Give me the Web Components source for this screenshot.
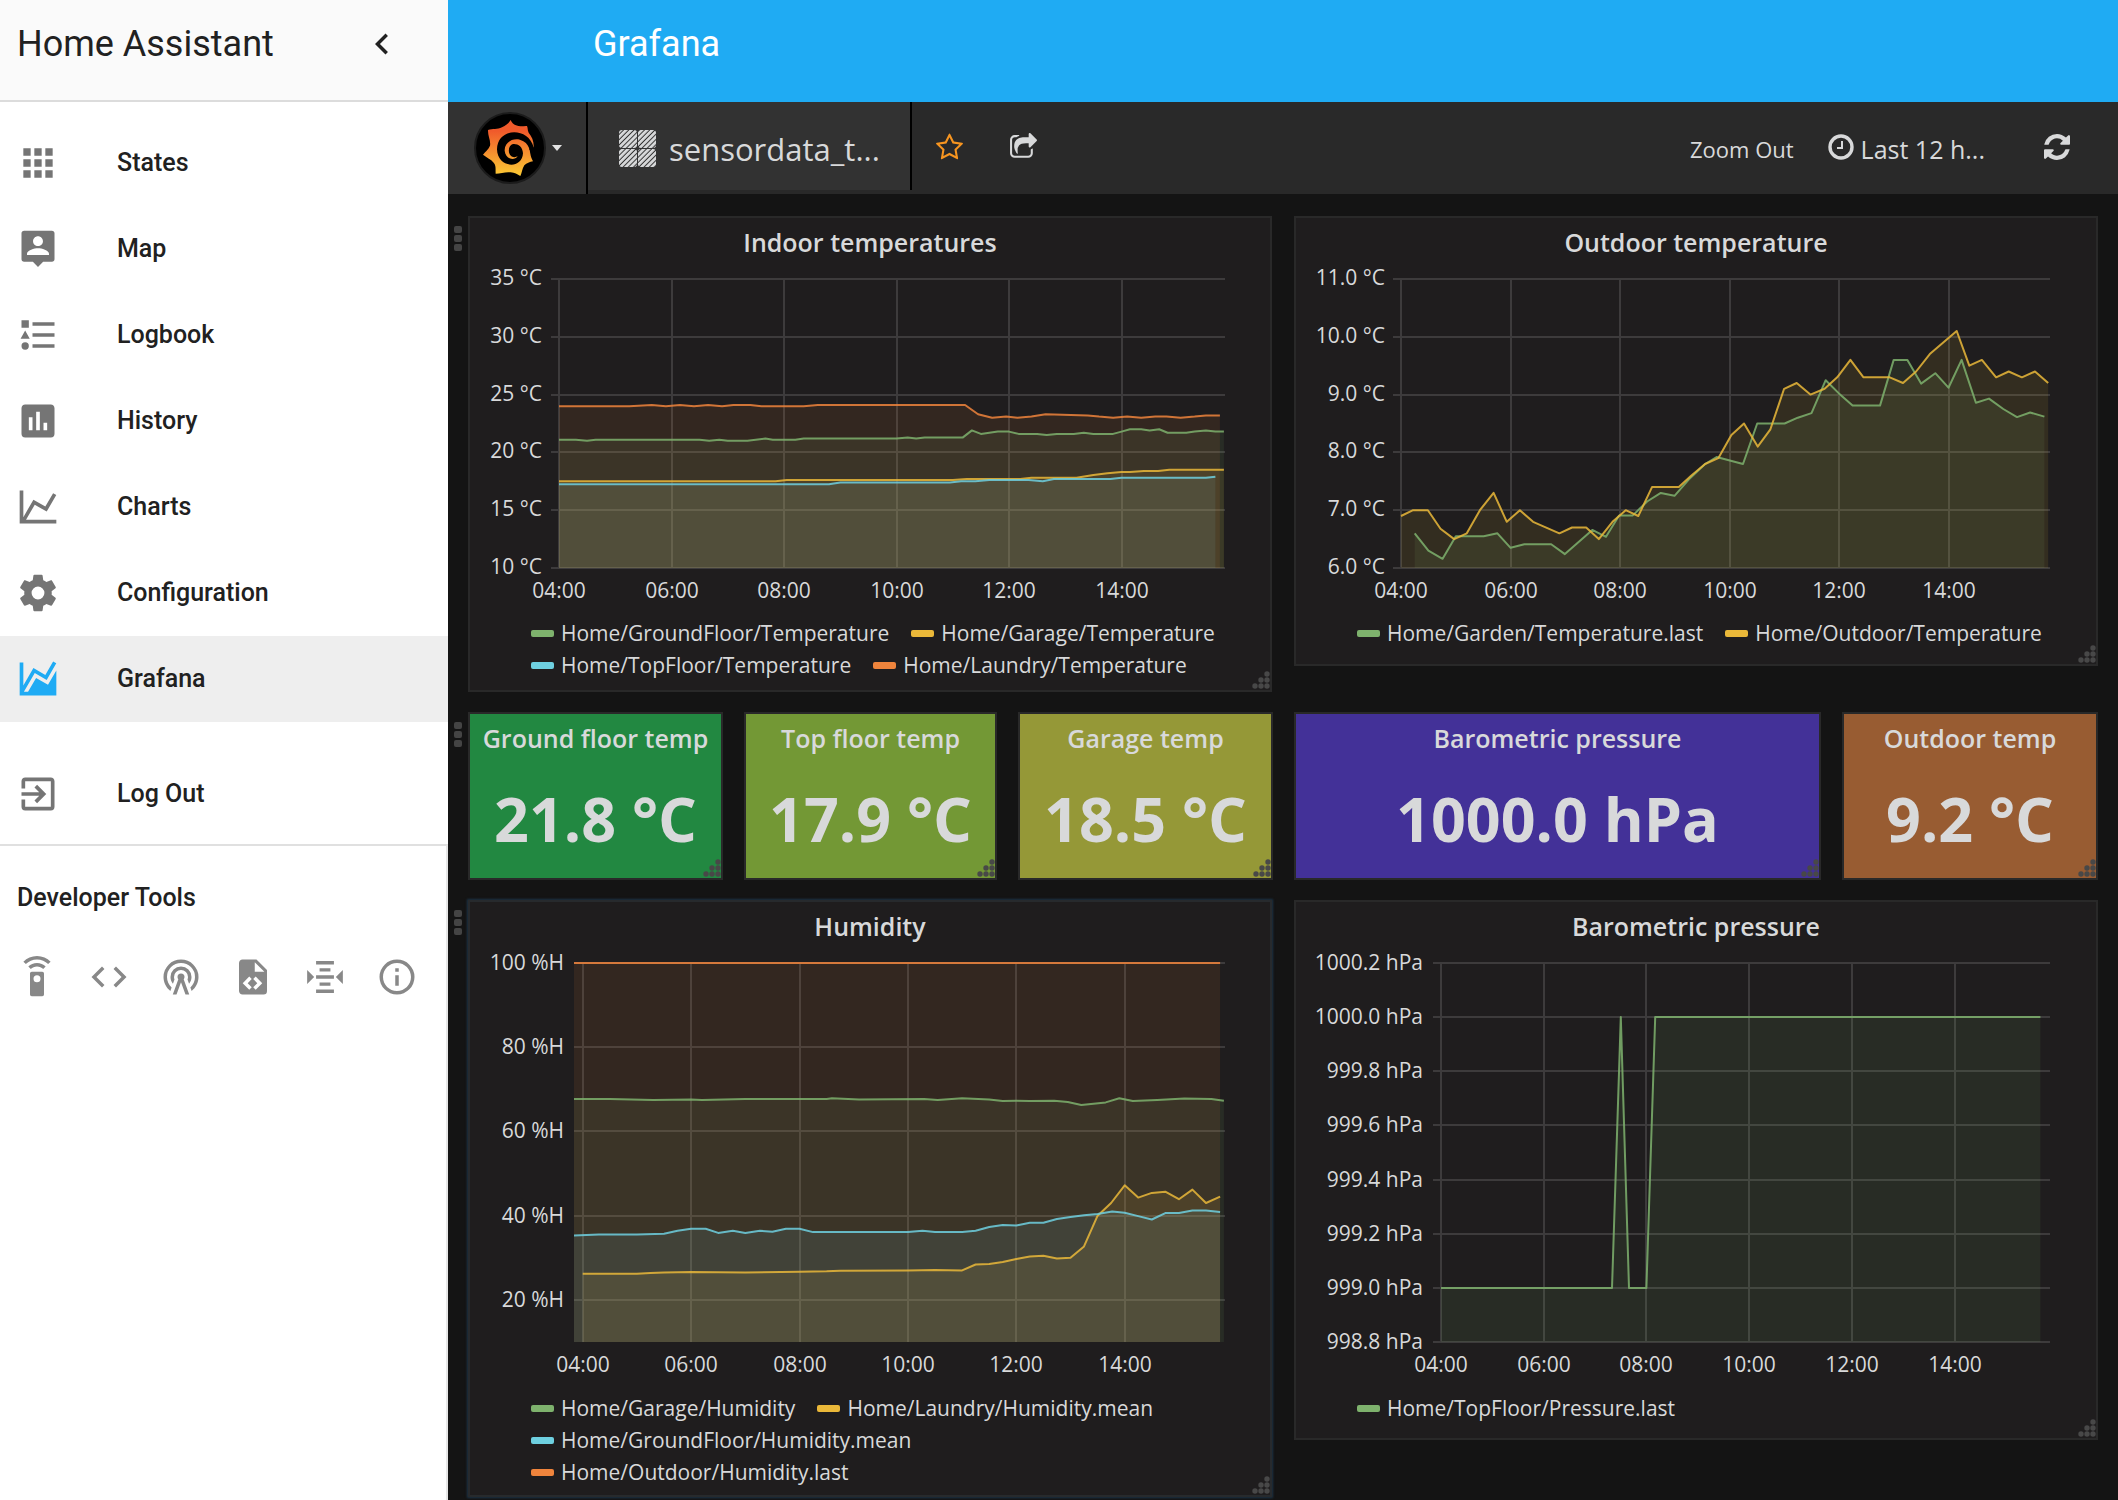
<!DOCTYPE html>
<html lang="en">
<head>
<meta charset="utf-8">
<title>Home Assistant – Grafana</title>
<style>
  html, body { margin: 0; height: 100%; }
  body { background: #141414; overflow: hidden; }
  ha-app { font-family: Roboto, "Open Sans", sans-serif; }
</style>
</head>
<body>
<ha-app></ha-app>

<script>
/* ---------- icons ---------- */
const ICONS = {
  'chevron-left': 'M15.41,16.58L10.83,12L15.41,7.41L14,6L8,12L14,18L15.41,16.58Z',
  apps: 'M16,20H20V16H16M16,14H20V10H16M10,8H14V4H10M16,8H20V4H16M10,14H14V10H10M4,14H8V10H4M4,20H8V16H4M10,20H14V16H10M4,8H8V4H4V8Z',
  account: 'M18,15.3H6V14.6C6,12.7 10,11.6 12,11.6C14,11.6 18,12.7 18,14.6M12,5.1C13.5,5.1 14.7,6.3 14.7,7.8C14.7,9.3 13.5,10.4 12,10.4C10.5,10.4 9.3,9.3 9.3,7.8C9.3,6.3 10.5,5.1 12,5.1M19.6,2H4.4C3.6,2 3,2.6 3,3.4V17.6C3,18.4 3.6,19 4.4,19H9.2L12,21.8L14.8,19H19.6C20.4,19 21,18.4 21,17.6V3.4C21,2.6 20.4,2 19.6,2Z',
  list: 'M5,9.5L7.5,14H2.5L5,9.5M3,4H7V8H3V4M5,20A2,2 0 0,0 7,18A2,2 0 0,0 5,16A2,2 0 0,0 3,18A2,2 0 0,0 5,20M9,5V7H21V5H9M9,19H21V17H9V19M9,13H21V11H9V13Z',
  poll: 'M17,17H15V13H17M13,17H11V7H13M9,17H7V10H9M19,3H5C3.89,3 3,3.89 3,5V19A2,2 0 0,0 5,21H19A2,2 0 0,0 21,19V5C21,3.89 20.1,3 19,3Z',
  chart: 'M16,11.78L20.24,4.45L21.97,5.45L16.74,14.5L10.23,10.75L5.46,19H22V21H2V3H4V17.54L9.5,8L16,11.78Z',
  gear: 'M12,15.5A3.5,3.5 0 0,1 8.5,12A3.5,3.5 0 0,1 12,8.5A3.5,3.5 0 0,1 15.5,12A3.5,3.5 0 0,1 12,15.5M19.43,12.97C19.47,12.65 19.5,12.33 19.5,12C19.5,11.67 19.47,11.34 19.43,11L21.54,9.37C21.73,9.22 21.78,8.95 21.66,8.73L19.66,5.27C19.54,5.05 19.27,4.96 19.05,5.05L16.56,6.05C16.04,5.66 15.5,5.32 14.87,5.07L14.5,2.42C14.46,2.18 14.25,2 14,2H10C9.75,2 9.54,2.18 9.5,2.42L9.13,5.07C8.5,5.32 7.96,5.66 7.44,6.05L4.95,5.05C4.73,4.96 4.46,5.05 4.34,5.27L2.34,8.73C2.21,8.95 2.27,9.22 2.46,9.37L4.57,11C4.53,11.34 4.5,11.67 4.5,12C4.5,12.33 4.53,12.65 4.57,12.97L2.46,14.63C2.27,14.78 2.21,15.05 2.34,15.27L4.34,18.73C4.46,18.95 4.73,19.03 4.95,18.95L7.44,17.94C7.96,18.34 8.5,18.68 9.13,18.93L9.5,21.58C9.54,21.82 9.75,22 10,22H14C14.25,22 14.46,21.82 14.5,21.58L14.87,18.93C15.5,18.67 16.04,18.34 16.56,17.94L19.05,18.95C19.27,19.03 19.54,18.95 19.66,18.73L21.66,15.27C21.78,15.05 21.73,14.78 21.54,14.63L19.43,12.97Z',
  area: 'M17.45,15.18L22,7.31V19L22,21H2V3H4V15.54L9.5,6L16,9.78L20.24,2.45L21.97,3.45L16.74,12.5L10.23,8.75L4.31,19H6.57L10.96,11.44L17.45,15.18Z',
  exit: 'M19,3H5C3.89,3 3,3.89 3,5V9H5V5H19V19H5V15H3V19A2,2 0 0,0 5,21H19A2,2 0 0,0 21,19V5C21,3.89 20.1,3 19,3M10.08,15.58L11.5,17L16.5,12L11.5,7L10.08,8.41L12.67,11H3V13H12.67L10.08,15.58Z',
  remote: 'M12,0C8.96,0 6.21,1.23 4.22,3.22L5.63,4.63C7.26,3 9.5,2 12,2C14.5,2 16.74,3 18.36,4.64L19.77,3.23C17.79,1.23 15.04,0 12,0M7.05,6.05L8.46,7.46C9.37,6.56 10.62,6 12,6C13.38,6 14.63,6.56 15.54,7.46L16.95,6.05C15.68,4.78 13.93,4 12,4C10.07,4 8.32,4.78 7.05,6.05M12,15A2,2 0 0,1 10,13A2,2 0 0,1 12,11A2,2 0 0,1 14,13A2,2 0 0,1 12,15M15,9H9A1,1 0 0,0 8,10V22A1,1 0 0,0 9,23H15A1,1 0 0,0 16,22V10A1,1 0 0,0 15,9Z',
  code: 'M14.6,16.6L19.2,12L14.6,7.4L16,6L22,12L16,18L14.6,16.6M9.4,16.6L4.8,12L9.4,7.4L8,6L2,12L8,18L9.4,16.6Z',
  tower: 'M12,10A2,2 0 0,1 14,12C14,12.5 13.82,12.94 13.53,13.29L16.7,22H14.57L12,14.93L9.43,22H7.3L10.47,13.29C10.18,12.94 10,12.5 10,12A2,2 0 0,1 12,10M12,8A4,4 0 0,0 8,12C8,12.5 8.1,13 8.28,13.46L7.4,15.86C6.53,14.81 6,13.47 6,12A6,6 0 0,1 12,6A6,6 0 0,1 18,12C18,13.47 17.47,14.81 16.6,15.86L15.72,13.46C15.9,13 16,12.5 16,12A4,4 0 0,0 12,8M12,4A8,8 0 0,0 4,12C4,14.36 5,16.5 6.64,17.94L5.92,19.94C3.54,18.11 2,15.23 2,12A10,10 0 0,1 12,2A10,10 0 0,1 22,12C22,15.23 20.46,18.11 18.08,19.94L17.36,17.94C19,16.5 20,14.36 20,12A8,8 0 0,0 12,4Z',
  file: 'M13,9H18.5L13,3.5V9M6,2H14L20,8V20A2,2 0 0,1 18,22H6C4.89,22 4,21.1 4,20V4C4,2.89 4.89,2 6,2M6.12,15.5L9.86,19.24L11.28,17.83L8.95,15.5L11.28,13.17L9.86,11.76L6.12,15.5M17.28,15.5L13.54,11.76L12.12,13.17L14.45,15.5L12.12,17.83L13.54,19.24L17.28,15.5Z',
  mqtt: 'M6.9,2.9H17.1V4.9H6.9ZM8.9,7H15.1V8.8H8.9ZM6.9,11H17.1V13H6.9ZM8.9,15.2H15.1V17H8.9ZM6.9,19.1H17.1V21.1H6.9ZM1.8,8L5.8,12L1.8,16ZM22.2,8L18.2,12L22.2,16Z',
  info: 'M11,9H13V7H11M12,20C7.59,20 4,16.41 4,12C4,7.59 7.59,4 12,4C16.41,4 20,7.59 20,12C20,16.41 16.41,20 12,20M12,2A10,10 0 0,0 2,12A10,10 0 0,0 12,22A10,10 0 0,0 22,12A10,10 0 0,0 12,2M11,17H13V11H11V17Z'
};

/* Attach an open shadow root filled from a markup string. */
function shadow(host, html) {
  const t = document.createElement('template');
  t.innerHTML = html;
  host.attachShadow({ mode: 'open' }).append(t.content.cloneNode(true));
  return host.shadowRoot;
}

class HaIcon extends HTMLElement {
  connectedCallback() {
    if (this.shadowRoot) return;
    shadow(this, `<style>:host{display:inline-flex;flex:none;width:44px;height:44px}svg{width:100%;height:100%;fill:currentColor}</style>
      <svg viewBox="0 0 24 24" aria-hidden="true"><path fill-rule="evenodd" d="${ICONS[this.getAttribute('name')]}"/></svg>`);
  }
}
customElements.define('ha-icon', HaIcon);

class NavItem extends HTMLElement {
  connectedCallback() {
    if (this.shadowRoot) return;
    shadow(this, `<style>
      :host{display:block}
      a{display:flex;align-items:center;gap:57px;height:86px;padding:0 16px;color:#212121;text-decoration:none;font-weight:500;font-size:25px;line-height:32px}
      ha-icon{color:#757575}
      :host([active]) a{background:#eee}
      :host([active]) ha-icon{color:#1fabf4}
      </style><a href="#"><ha-icon name="${this.getAttribute('icon')}"></ha-icon><span><slot></slot></span></a>`);
  }
}
customElements.define('nav-item', NavItem);

class HaSidebar extends HTMLElement {
  connectedCallback() {
    if (this.shadowRoot) return;
    const tools = [['remote', 'Services'], ['code', 'States'], ['tower', 'Events'], ['file', 'Templates'], ['mqtt', 'MQTT'], ['info', 'Info']];
    shadow(this, `<style>
      :host{display:flex;flex-direction:column;background:#fff;color:#212121}
      header{box-sizing:border-box;height:102px;padding:0 45px 12px 17px;border-bottom:2px solid #dcdcdc;background:#fafafa;display:flex;align-items:center;justify-content:space-between}
      h1{margin:0;font-weight:400;font-size:36px;line-height:48px}
      button{border:0;padding:0;background:none;color:inherit;display:flex;justify-content:center}
      header ha-icon,.tools ha-icon{width:42px;height:42px}
      nav{padding-top:18px}
      .out{margin-top:29px;margin-bottom:7px}
      .dev{flex:1;border-top:2px solid #e0e0e0;border-right:2px solid #e6e6e6}
      h2{margin:36px 0 0 17px;font-weight:500;font-size:25px;line-height:32px}
      .tools{display:flex;padding:42px 0 0 1px;color:#888}
      .tools button{width:72px}
      </style>
      <header><h1>Home Assistant</h1><button aria-label="Close menu"><ha-icon name="chevron-left"></ha-icon></button></header>
      <nav>
        <nav-item icon="apps">States</nav-item>
        <nav-item icon="account">Map</nav-item>
        <nav-item icon="list">Logbook</nav-item>
        <nav-item icon="poll">History</nav-item>
        <nav-item icon="chart">Charts</nav-item>
        <nav-item icon="gear">Configuration</nav-item>
        <nav-item icon="area" active>Grafana</nav-item>
        <nav-item icon="exit" class="out">Log Out</nav-item>
      </nav>
      <section class="dev"><h2>Developer Tools</h2>
        <div class="tools">${tools.map(([i, l]) => `<button aria-label="${l}"><ha-icon name="${i}"></ha-icon></button>`).join('')}</div>
      </section>`);
  }
}
customElements.define('ha-sidebar', HaSidebar);

/* ---------- Grafana ---------- */
class GrafanaLogo extends HTMLElement {
  connectedCallback() {
    if (this.shadowRoot) return;
    shadow(this, `<style>:host{display:block;flex:none;width:72px;height:72px}svg{display:block;width:100%;height:100%}</style>
      <svg viewBox="42 36 216 216" aria-hidden="true">
        <defs><linearGradient id="g" x1="0" y1="0" x2="0" y2="1"><stop offset="0.2" stop-color="#f05a2b"/><stop offset="1" stop-color="#fcca34"/></linearGradient></defs>
        <circle cx="150" cy="144" r="105" fill="#000" stroke="#1b1b1b" stroke-width="6"/>
        <path fill="url(#g)" d="M152,60C155,67 160,73 168,76C180,82 192,77 201,78C204,84 202,90 206,98C216,110 222,124 221,142L208,146C211,156 210,166 219,184C209,186 200,189 193,196C186,206 186,220 181,228C172,224 164,217 152,217C138,215 122,220 107,221C106,208 109,197 101,188C93,177 78,172 69,164C76,155 86,148 90,137C93,122 83,108 84,90C98,85 112,90 126,82C138,76 146,70 152,60Z"/>
        <path fill="#000" d="M221,142C205,80 112,82 111,148C112,204 186,210 189,160C188,140 174,131 160,132C148,134 143,150 149,163C154,173 166,173 173,169C162,184 136,177 134,152C133,125 165,108 190,124C202,131 206,140 209,150L222,150Z"/>
      </svg>`);
  }
}
customElements.define('grafana-logo', GrafanaLogo);

class GrafanaNav extends HTMLElement {
  connectedCallback() {
    if (this.shadowRoot) return;
    shadow(this, `<style>
      :host{display:flex;height:92px;background:#292929;color:#d8d9da}
      button{box-sizing:border-box;border:0;margin:0;padding:0;background:none;color:inherit;font:inherit;display:flex;align-items:center}
      .menu{width:140px;padding-left:26px;background:#323232;border-right:2px solid #000}
      .menu i{margin-left:6px;border:5px solid transparent;border-top:6px solid #e3e3e3;border-bottom:0}
      .dash{width:324px;height:88px;padding:5px 0 0 31px;gap:13px;background:#323232;border-right:2px solid #000;font-size:31px}
      .dash svg{width:37px;height:37px}
      .star{margin-left:23px;color:#f79520}
      .share{margin-left:45px}
      .star svg,.share svg{width:29px;height:29px}
      .star,.share{height:90px}
      .spacer{flex:1}
      .zoom,.time{padding-top:2px}
      .zoom{font-size:22px}
      .time{margin-left:34px;gap:7px;font-size:25px}
      .time svg{width:26px;height:26px;margin-bottom:4px}
      .refresh{margin:0 48px 2px 59px}
      .refresh svg{width:26px;height:26px}
      svg{display:block;flex:none}
      </style>
      <button class="menu" aria-label="Main menu"><grafana-logo></grafana-logo><i></i></button>
      <button class="dash">
        <svg viewBox="0 0 37 37" aria-hidden="true">
          <defs><pattern id="h" width="3.7" height="3.7" patternUnits="userSpaceOnUse" patternTransform="rotate(-45)"><rect width="3.7" height="2.7" fill="#d8d9da"/></pattern></defs>
          <g fill="url(#h)"><rect width="18" height="18" rx="3"/><rect x="19" width="18" height="18" rx="3"/><rect y="19" width="18" height="18" rx="3"/><rect x="19" y="19" width="18" height="18" rx="3"/></g>
        </svg><span>sensordata_t...</span></button>
      <button class="star" aria-label="Star dashboard"><svg viewBox="0 0 1792 1792" fill="currentColor"><path d="M1201 1004l306-297-422-62-189-382-189 382-422 62 306 297-73 421 378-199 377 199zm527-357q0 22-26 48l-363 354 86 500q1 7 1 20 0 50-41 50-19 0-40-12l-449-236-449 236q-22 12-40 12-21 0-31.5-14.5t-10.5-35.5q0-6 2-20l86-500-364-354q-25-27-25-48 0-37 56-46l502-73 225-455q19-41 49-41t49 41l225 455 502 73q56 9 56 46z"/></svg></button>
      <button class="share" aria-label="Share dashboard"><svg viewBox="0 0 1792 1792" fill="currentColor"><path d="M1472 989v259q0 119-84.5 203.5t-203.5 84.5h-832q-119 0-203.5-84.5t-84.5-203.5v-832q0-119 84.5-203.5t203.5-84.5h255q13 0 22.5 9.5t9.5 22.5q0 27-26 32-77 26-133 60-10 4-16 4h-112q-66 0-113 47t-47 113v832q0 66 47 113t113 47h832q66 0 113-47t47-113v-214q0-19 18-29 28-13 54-37 16-16 35-8 21 9 21 29zm237-496l-384 384q-18 19-45 19-12 0-25-5-39-17-39-59v-192h-160q-323 0-438 131-119 137-74 473 3 23-20 34-8 2-12 2-16 0-26-13-10-14-21-31t-39.5-68.5-49.5-99.5-38.5-114-17.5-122q0-49 3.5-91t14-90 28-88 47-81.5 68.5-74 94.5-61.5 124.5-48.5 159.5-30.5 196.5-11h160v-192q0-42 39-59 13-5 25-5 26 0 45 19l384 384q19 19 19 45t-19 45z"/></svg></button>
      <span class="spacer"></span>
      <button class="zoom">Zoom Out</button>
      <button class="time"><svg viewBox="0 0 26 26" fill="none" stroke="currentColor" aria-hidden="true"><circle cx="13" cy="13" r="11" stroke-width="3.4"/><path d="M14 7V14H9" stroke-width="2"/></svg><span>Last 12 h...</span></button>
      <button class="refresh" aria-label="Refresh"><svg viewBox="0 0 1536 1536" fill="currentColor"><path d="M1511 928q0 5-1 7-64 268-268 434.5t-478 166.5q-146 0-282.5-55t-243.5-157l-129 129q-19 19-45 19t-45-19-19-45v-448q0-26 19-45t45-19h448q26 0 45 19t19 45-19 45l-137 137q71 66 161 102t187 36q134 0 250-65t186-179q11-17 53-117 8-23 30-23h192q13 0 22.500 9.500t9.500 22.500zm25-800v448q0 26-19 45t-45 19h-448q-26 0-45-19t-19-45 19-45l138-138q-148-137-349-137-134 0-250 65t-186 179q-11 17-53 117-8 23-30 23h-199q-13 0-22.500-9.500t-9.500-22.500v-7q65-268 270-434.500t480-166.500q146 0 284 55.500t245 156.500l130-129q19-19 45-19t45 19 19 45z"/></svg></button>`);
  }
}
customElements.define('grafana-nav', GrafanaNav);

class DashRow extends HTMLElement {
  connectedCallback() {
    if (this.shadowRoot) return;
    shadow(this, `<style>
      :host{display:grid;grid-template-columns:20px 1fr}
      .handle{display:flex;flex-direction:column;gap:2px;padding:10px 0 0 6px}
      .handle i{width:8px;height:7px;border-radius:2px;background:#444}
      .panels{display:grid;grid-template-columns:var(--cols);gap:var(--gap);align-items:start}
      </style><div class="handle"><i></i><i></i><i></i></div><div class="panels"><slot></slot></div>`);
  }
}
customElements.define('dash-row', DashRow);

class DashPanel extends HTMLElement {
  connectedCallback() {
    if (this.shadowRoot) return;
    shadow(this, `<style>
      :host{display:flex;flex-direction:column;position:relative;box-sizing:border-box;border:2px solid #292929;background:#1f1d1e;color:#d8d9da;padding-bottom:6px}
      :host([focused]){border-color:#272a2d;box-shadow:0 0 2px 1px #1c3345}
      h3{margin:0;text-align:center;font-weight:600;font-size:25px;line-height:48px;white-space:nowrap}
      svg{position:absolute;right:0;bottom:0;width:18px;height:19px;fill:#484848}
      </style><h3>${this.getAttribute('heading')}</h3><slot></slot>
      <svg viewBox="0 0 18 19" aria-hidden="true"><circle cx="15" cy="3" r="2.700"/><circle cx="9" cy="9" r="2.700"/><circle cx="15" cy="9" r="2.700"/><circle cx="3" cy="15" r="2.700"/><circle cx="9" cy="15" r="2.700"/><circle cx="15" cy="15" r="2.700"/></svg>`);
  }
}
customElements.define('dash-panel', DashPanel);

class SingleStat extends HTMLElement {
  connectedCallback() {
    if (this.shadowRoot) return;
    shadow(this, `<style>:host{display:flex;flex:1;align-items:center;justify-content:center;padding-top:4px;font-weight:700;font-size:61px;line-height:80px;white-space:nowrap}</style><span><slot></slot></span>`);
  }
}
customElements.define('single-stat', SingleStat);

class ChartLegend extends HTMLElement {
  set items(list) {
    this.attachShadow({ mode: 'open' }).innerHTML = `<style>
      :host{display:flex;flex-wrap:wrap;column-gap:22px;padding:0 24px 0 61px;font-size:21px;line-height:32px}
      span{display:flex;align-items:center;gap:7px;white-space:nowrap}
      i{width:23px;height:7px;border-radius:2px}
      </style>` + list.map(s => `<span><i style="background:${s.color}"></i>${s.name}</span>`).join('');
  }
}
customElements.define('chart-legend', ChartLegend);

const GREEN = '#7eb26d', YELLOW = '#eab839', BLUE = '#6ed0e0', ORANGE = '#ef843c';

/* Each series is a flat list: hour, value, hour, value, ... */
const CHARTS = {
  indoor: {
    height: 351, bottom: 302, left: 89, right: 755, labelX: 72, labelDy: 6, tick: 8,
    hour0: 4, perHour: 56.25, min: 10, max: 35,
    ticks: [35, 30, 25, 20, 15, 10], format: v => v + ' °C',
    series: [
      { name: 'Home/GroundFloor/Temperature', color: GREEN, data: [4,21.1,4.3,21.1,4.5,21,4.65,21.1,6.5,21.1,6.67,21,6.85,21.1,7,21,7.35,21,7.67,21.2,7.8,21.1,8.2,21.1,8.35,21.2,10,21.2,10.2,21.3,10.35,21.2,10.5,21.3,11.18,21.3,11.34,21.9,11.5,21.6,11.65,21.7,11.8,21.8,12,21.8,12.17,21.6,12.5,21.6,12.67,21.5,12.85,21.6,13.15,21.6,13.33,21.7,13.5,21.6,13.85,21.6,14,21.8,14.15,22,14.35,22,14.5,21.9,14.67,22,14.82,21.7,15.15,21.7,15.3,21.8,15.5,21.9,15.67,21.8,15.82,21.8] },
      { name: 'Home/Garage/Temperature', color: YELLOW, data: [4,17.5,7.85,17.5,8.05,17.6,11,17.6,11.25,17.7,12.2,17.7,12.4,17.8,13.2,17.8,13.5,18.05,13.75,18.2,14,18.3,14.15,18.3,14.4,18.4,14.65,18.4,14.85,18.5,15.82,18.5] },
      { name: 'Home/TopFloor/Temperature', color: BLUE, data: [4,17.25,8.8,17.25,9,17.4,10.95,17.4,11.15,17.5,11.4,17.5,11.65,17.6,12.35,17.6,12.6,17.5,12.8,17.7,13.8,17.7,14,17.8,15.5,17.8,15.67,17.9] },
      { name: 'Home/Laundry/Temperature', color: ORANGE, data: [4,24,5.25,24,5.65,24.1,5.9,24,6.15,24.1,6.4,24,6.65,24.1,6.9,24,7.1,24.1,7.4,24.1,7.6,24,8.35,24,8.6,24.1,11.22,24.1,11.45,23.3,11.7,23,11.95,23.1,12.15,23,12.4,23.1,12.65,23.3,13.4,23.2,13.6,23.1,13.85,23,14.1,23.1,14.35,23,14.6,23.1,14.8,23.1,15.05,23,15.3,23.1,15.5,23.2,15.75,23.2] }
    ]
  },
  outdoor: {
    height: 351, bottom: 302, left: 105, right: 754, labelX: 89, labelDy: 6, tick: 8,
    hour0: 4, perHour: 54.8, min: 6, max: 11,
    ticks: [11, 10, 9, 8, 7, 6], format: v => v.toFixed(1) + ' °C',
    series: [
      { name: 'Home/Garden/Temperature.last', color: GREEN, data: [4.25,6.6,4.5,6.3,4.76,6.16,5,6.55,5.51,6.55,5.76,6.6,6,6.35,6.25,6.41,6.74,6.41,6.99,6.24,7.49,6.66,7.74,6.54,7.98,6.91,8.23,6.91,8.49,7.15,8.74,7.3,8.99,7.25,9.25,7.53,9.55,7.8,9.76,7.92,10.24,7.8,10.5,8.5,11,8.5,11.24,8.6,11.49,8.68,11.75,9.25,11.99,9.02,12.24,8.81,12.74,8.81,12.99,9.6,13.24,9.6,13.49,9.19,13.75,9.37,13.99,9.12,14.23,9.6,14.49,8.86,14.73,8.93,14.99,8.75,15.24,8.61,15.48,8.69,15.74,8.62] },
      { name: 'Home/Outdoor/Temperature', color: YELLOW, data: [4,6.9,4.22,7,4.49,7,4.72,6.68,4.97,6.5,5.2,6.6,5.44,7,5.69,7.3,5.93,6.8,6.17,7,6.41,6.8,6.89,6.6,7.12,6.7,7.38,6.7,7.61,6.5,7.86,6.8,8.1,7,8.33,6.9,8.58,7.4,9.07,7.4,9.3,7.6,9.55,7.8,9.79,7.9,10.03,8.3,10.26,8.5,10.51,8.1,10.74,8.4,10.99,9.1,11.22,9.2,11.47,9,11.73,9.1,11.96,9.3,12.2,9.6,12.44,9.3,12.92,9.3,13.16,9.2,13.4,9.4,13.65,9.7,14.14,10.1,14.37,9.5,14.6,9.6,14.86,9.3,15.09,9.4,15.33,9.3,15.57,9.4,15.81,9.2] }
    ]
  },
  humidity: {
    height: 442, bottom: 392, left: 104, right: 755, labelX: 94, labelDy: 7, tick: 0,
    hour0: 3.84, perHour: 54.2, min: 10, max: 100,
    ticks: [100, 80, 60, 40, 20], format: v => v + ' %H',
    series: [
      { name: 'Home/Garage/Humidity', color: GREEN, data: [3.84,67.7,4.5,67.7,5.3,67.5,6,67.6,6.2,67.5,7,67.7,8.5,67.7,8.6,67.9,9.1,67.6,10.3,67.7,10.55,67.5,11,67.9,11.5,67.6,11.75,67.2,12,67.3,12.25,67.2,12.7,67.3,12.95,67,13.2,66.3,13.65,66.9,13.9,67.9,14.15,67.2,14.6,67.5,15.1,67.8,15.6,67.7,15.83,67.3] },
      { name: 'Home/Laundry/Humidity.mean', color: YELLOW, data: [4,26.2,5,26.2,5.25,26.4,5.5,26.5,6,26.6,7,26.5,8,26.7,8.5,26.8,8.75,26.9,10,27,10.5,27.1,11,27,11.25,28.4,11.5,28.5,11.75,29,12,29.7,12.25,30.3,12.5,30.5,12.75,29.8,13,30,13.25,32.7,13.5,40,13.75,43,14,47.2,14.25,44.3,14.5,45.4,14.75,45.7,15,43.9,15.25,46.2,15.5,43,15.76,44.5] },
      { name: 'Home/GroundFloor/Humidity.mean', color: BLUE, data: [3.84,35.3,4.3,35.5,5,35.5,5.5,35.7,5.75,36.4,6,36.9,6.27,36.9,6.5,35.9,6.77,36.4,7,35.9,7.27,36.4,7.5,36.2,7.75,36.9,8,36.9,8.25,36.1,10,36.1,10.27,36.4,10.5,36.1,11,36.1,11.25,36.4,11.5,37.3,11.75,37.8,12,37.7,12.25,38.3,12.5,38.3,12.75,39.2,13,39.7,13.25,40.1,13.5,40.4,13.77,41,14,40.7,14.25,39.9,14.5,39.1,14.75,40.6,15,40.6,15.25,41.2,15.5,41.2,15.76,40.9] },
      { name: 'Home/Outdoor/Humidity.last', color: ORANGE, data: [3.84,100,15.76,100] }
    ]
  },
  pressure: {
    height: 442, bottom: 392, left: 145, right: 754, labelX: 127, labelDy: 7, tick: 8,
    hour0: 4, perHour: 51.36, min: 998.8, max: 1000.2,
    ticks: [1000.2, 1000, 999.8, 999.6, 999.4, 999.2, 999, 998.8], format: v => v.toFixed(1) + ' hPa',
    series: [
      { name: 'Home/TopFloor/Pressure.last', color: GREEN, data: [4,999,7.33,999,7.5,1000,7.66,999,8,999,8.17,1000,15.67,1000] }
    ]
  }
};

class LineChart extends HTMLElement {
  connectedCallback() {
    if (this.shadowRoot) return;
    const c = CHARTS[this.getAttribute('source')], top = 13;
    const X = h => +(c.left + (h - c.hour0) * c.perHour).toFixed(1);
    const Y = v => +(c.bottom - (v - c.min) / (c.max - c.min) * (c.bottom - top)).toFixed(1);
    const hours = [4, 6, 8, 10, 12, 14];
    let grid = '', labels = '', fills = '', lines = '';
    for (const t of c.ticks) {
      const y = Math.round(Y(t));
      grid += `M${c.left - c.tick},${y}H${c.right}`;
      labels += `<text x="${c.labelX}" y="${y + c.labelDy}" text-anchor="end">${c.format(t)}</text>`;
    }
    for (const h of hours) {
      const x = Math.round(X(h));
      grid += `M${x},${top}V${c.bottom}`;
      labels += `<text x="${x}" y="${c.bottom + 30}" text-anchor="middle">${String(h).padStart(2, '0')}:00</text>`;
    }
    for (const s of c.series) {
      const p = [];
      for (let i = 0; i < s.data.length; i += 2) p.push(X(s.data[i]) + ',' + Y(s.data[i + 1]));
      const x0 = X(s.data[0]), x1 = X(s.data[s.data.length - 2]);
      fills += `<path fill="${s.color}" fill-opacity="0.1" d="M${x0},${c.bottom}L${p.join('L')}L${x1},${c.bottom}Z"/>`;
      lines += `<polyline stroke="${s.color}" points="${p.join(' ')}"/>`;
    }
    const root = shadow(this, `<style>
      :host{display:block}
      svg{display:block;width:100%;height:auto;overflow:visible}
      text{font-size:21px;fill:#d8d9da}
      </style>
      <svg viewBox="0 0 800 ${c.height}" role="img">
        <path d="${grid}" fill="none" stroke="#c8c8c8" stroke-opacity="0.18" stroke-width="2"/>
        ${fills}<g fill="none" stroke-width="2" stroke-opacity="0.85" stroke-linejoin="round">${lines}</g>${labels}
      </svg><chart-legend></chart-legend>`);
    root.querySelector('chart-legend').items = c.series;
  }
}
customElements.define('line-chart', LineChart);

class GrafanaDashboard extends HTMLElement {
  connectedCallback() {
    if (this.shadowRoot) return;
    shadow(this, `<style>
      :host{display:block;background:#141414;font-family:"Open Sans","Noto Sans",sans-serif}
      main{display:flex;flex-direction:column;gap:20px;padding:22px 20px 2px 0}
      .halves{--cols:1fr 1fr;--gap:22px}
      .stats{--cols:255fr 253fr 255fr 527fr 256fr;--gap:21px}
      .stats dash-panel{height:168px}
      </style>
      <grafana-nav></grafana-nav>
      <main>
        <dash-row class="halves">
          <dash-panel heading="Indoor temperatures" style="min-height:476px"><line-chart source="indoor"></line-chart></dash-panel>
          <dash-panel heading="Outdoor temperature" style="min-height:450px"><line-chart source="outdoor"></line-chart></dash-panel>
        </dash-row>
        <dash-row class="stats">
          <dash-panel heading="Ground floor temp" style="background:#228841"><single-stat>21.8 °C</single-stat></dash-panel>
          <dash-panel heading="Top floor temp" style="background:#739835"><single-stat>17.9 °C</single-stat></dash-panel>
          <dash-panel heading="Garage temp" style="background:#959837"><single-stat>18.5 °C</single-stat></dash-panel>
          <dash-panel heading="Barometric pressure" style="background:#433198"><single-stat>1000.0 hPa</single-stat></dash-panel>
          <dash-panel heading="Outdoor temp" style="background:#985c32"><single-stat>9.2 °C</single-stat></dash-panel>
        </dash-row>
        <dash-row class="halves">
          <dash-panel focused heading="Humidity" style="min-height:597px"><line-chart source="humidity"></line-chart></dash-panel>
          <dash-panel heading="Barometric pressure" style="min-height:540px"><line-chart source="pressure"></line-chart></dash-panel>
        </dash-row>
      </main>`);
  }
}
customElements.define('grafana-dashboard', GrafanaDashboard);

class HaApp extends HTMLElement {
  connectedCallback() {
    if (this.shadowRoot) return;
    shadow(this, `<style>
      :host{display:grid;grid-template-columns:448px minmax(0,1fr);min-height:100vh}
      .bar{display:flex;align-items:center;box-sizing:border-box;height:102px;padding:0 0 14px 145px;background:#1fabf3;color:#fff}
      h1{margin:0;font-weight:400;font-size:36px;line-height:48px}
      </style>
      <ha-sidebar></ha-sidebar>
      <div><header class="bar"><h1>Grafana</h1></header><grafana-dashboard></grafana-dashboard></div>`);
  }
}
customElements.define('ha-app', HaApp);
</script>
</body>
</html>
